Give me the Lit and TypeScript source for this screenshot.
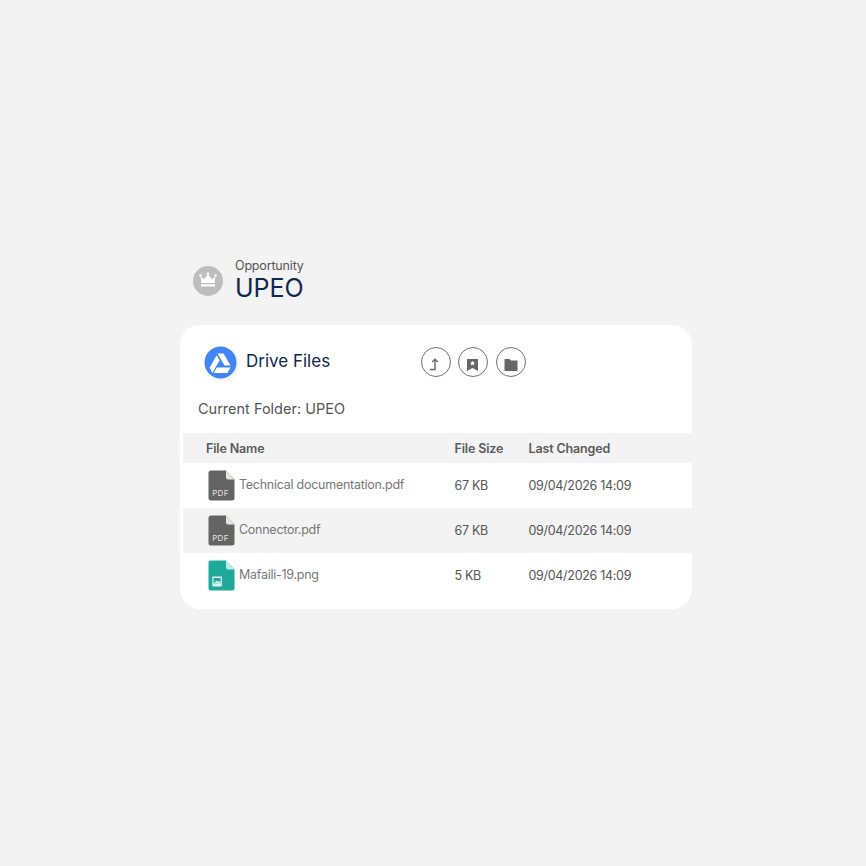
import { LitElement, html, css, svg } from "lit";
import { customElement } from "lit/decorators.js";

const rows = [
  { name: "Technical documentation.pdf", size: "67 KB", kind: "pdf" },
  { name: "Connector.pdf", size: "67 KB", kind: "pdf" },
  { name: "Mafaili-19.png", size: "5 KB", kind: "png" },
];

const fileIcon = (kind: string) => {
  const body = kind === "pdf" ? "#646464" : "#20a99a";
  const fold = kind === "pdf" ? "#e6e6e0" : "#b5f0e4";
  return html`<svg class="file" viewBox="0 0 27 31" width="27" height="31">
    <path d="M3 0.5H18L26.5 9.5V28a2.5 2.5 0 0 1-2.5 2.5H3A2.5 2.5 0 0 1 .5 28V3A2.5 2.5 0 0 1 3 .5Z" fill="${body}"/>
    <path d="M18 .5L26.5 9.5H20a2 2 0 0 1-2-2Z" fill="${fold}"/>
    ${kind === "pdf"
      ? svg`<text x="4.2" y="25.5" font-size="8" fill="#e4e4e4" font-family="Inter, sans-serif" letter-spacing=".3">PDF</text>`
      : svg`<rect x="4.300" y="16.500" width="9.500" height="10" fill="#dff5f1"/>
           <rect x="5.500" y="18" width="7.200" height="5.500" fill="#20a99a"/>
           <path d="M5.500 23.500L8.500 20.500l1.500 1.300 1.300-1 1.400 1.400v1.800Z" fill="#bfeae3"/>`}
  </svg>`;
};

@customElement("app-root")
export class AppRoot extends LitElement {
  static styles = css`
    :host {
      display: flex;
      box-sizing: border-box;
      width: 866px;
      height: 866px;
      padding: 2px 0 0 6px;
      align-items: center;
      justify-content: center;
      background: #f3f3f3;
      font-family: Inter, "Liberation Sans", sans-serif;
      color: #555;
    }
    .wrap { width: 512px; display: flex; flex-direction: column; }
    .head { display: flex; align-items: center; gap: 12px; padding-left: 13px; margin-bottom: 23px; }
    .crown { width: 30px; height: 30px; border-radius: 50%; background: #bdbdbd; display: flex; align-items: center; justify-content: center; }
    .titles { display: flex; flex-direction: column; gap: 2px; }
    .eyebrow { font-size: 12.5px; letter-spacing: -0.17px; line-height: 13px; color: #555; }
    .big { font-size: 25px; line-height: 28px; color: #10284f; }
    .card { background: #fff; border-radius: 20px; padding: 21px 0 11px 3px; display: flex; flex-direction: column; }
    .top { display: flex; align-items: center; padding-left: 21px; }
    .logo { width: 33px; height: 33px; flex: none; filter: drop-shadow(2px 2px 2px rgba(0, 0, 0, 0.07)); }
    .drive { font-size: 17px; color: #10284f; margin-left: 9px; width: 174.500px; padding-bottom: 3px; }
    .btns { display: flex; gap: 7.5px; margin-bottom: 1px; }
    .btn { width: 30px; height: 30px; box-sizing: border-box; border: 1px solid #6f6f6f; border-radius: 50%; display: flex; align-items: center; justify-content: center; }
    .btn svg { position: relative; top: 3px; }
    .folder { font-size: 14.5px; line-height: 18px; color: #555; margin: 21px 0 15px 15px; }
    .row { display: grid; grid-template-columns: 271.5px 74px 1fr; align-items: center; height: 45px; font-size: 12.5px; letter-spacing: -0.3px; color: #555; }
    .row.th { height: 30px; background: #f3f3f3; font-weight: 600; letter-spacing: -0.14px; color: #5a5a5a; }
    .row.alt { background: #f3f3f3; }
    .th .hn { padding-left: 23px; }
    .n { display: flex; align-items: center; padding-left: 25px; gap: 4px; letter-spacing: -0.26px; color: #777; }
    .n span { position: relative; top: -1px; }
    .file { flex: none; }
  `;

  render() {
    return html`<div class="wrap">
      <div class="head">
        <div class="crown">
          <svg width="30" height="30" viewBox="0 0 30 30" fill="#fff">
            <path d="M7.500 10.500L11 13 15 8.500 19 13 22.500 10.500 21.500 17H8.500Z"/>
            <circle cx="7.500" cy="9.500" r="1.300"/><circle cx="15" cy="7.800" r="1.300"/><circle cx="22.500" cy="9.500" r="1.300"/>
            <rect x="8" y="18.300" width="14" height="2.200"/>
          </svg>
        </div>
        <div class="titles"><div class="eyebrow">Opportunity</div><div class="big">UPEO</div></div>
      </div>
      <div class="card">
        <div class="top">
          <svg class="logo" viewBox="0 0 33 33">
            <circle cx="16.500" cy="16.500" r="16" fill="#4285f4"/>
            <path d="M13.500 7.500h6l7 12h-6Z" fill="#fff"/>
            <path d="M12.600 9.300l3 5.100-4.300 7.400-3 5.100-2.800-5Z" fill="#fff"/>
            <path d="M12.800 21.500h13.700l-3 5.500H9.700Z" fill="#fff"/>
          </svg>
          <div class="drive">Drive Files</div>
          <div class="btns">
            <div class="btn"><svg width="16" height="16" viewBox="0 0 16 16" fill="none" stroke="#666" stroke-width="1.400"><path d="M2 12.500H7V2.500M4.200 5L7 2.200l2.800 2.800"/></svg></div>
            <div class="btn"><svg width="16" height="16" viewBox="0 0 16 16"><path d="M2 2h11v12l-5.500-3L2 14Z" fill="#666"/><path d="M7.500 3.800l.75 1.550 1.700.2-1.250 1.150.35 1.700-1.550-.85-1.550.85.350-1.700-1.250-1.150 1.700-.2Z" fill="#fff"/></svg></div>
            <div class="btn"><svg width="16" height="16" viewBox="0 0 16 16"><path d="M1.500 2h5l1.500 1.500h6.500V14H1.500Z" fill="#666"/></svg></div>
          </div>
        </div>
        <div class="folder">Current Folder: UPEO</div>
        <div class="row th"><div class="hn">File Name</div><div>File Size</div><div>Last Changed</div></div>
        ${rows.map((r, i) => html`<div class="row ${i % 2 ? "alt" : ""}">
          <div class="n">${fileIcon(r.kind)}<span>${r.name}</span></div>
          <div>${r.size}</div><div>09/04/2026 14:09</div>
        </div>`)}
      </div>
    </div>`;
  }
}
